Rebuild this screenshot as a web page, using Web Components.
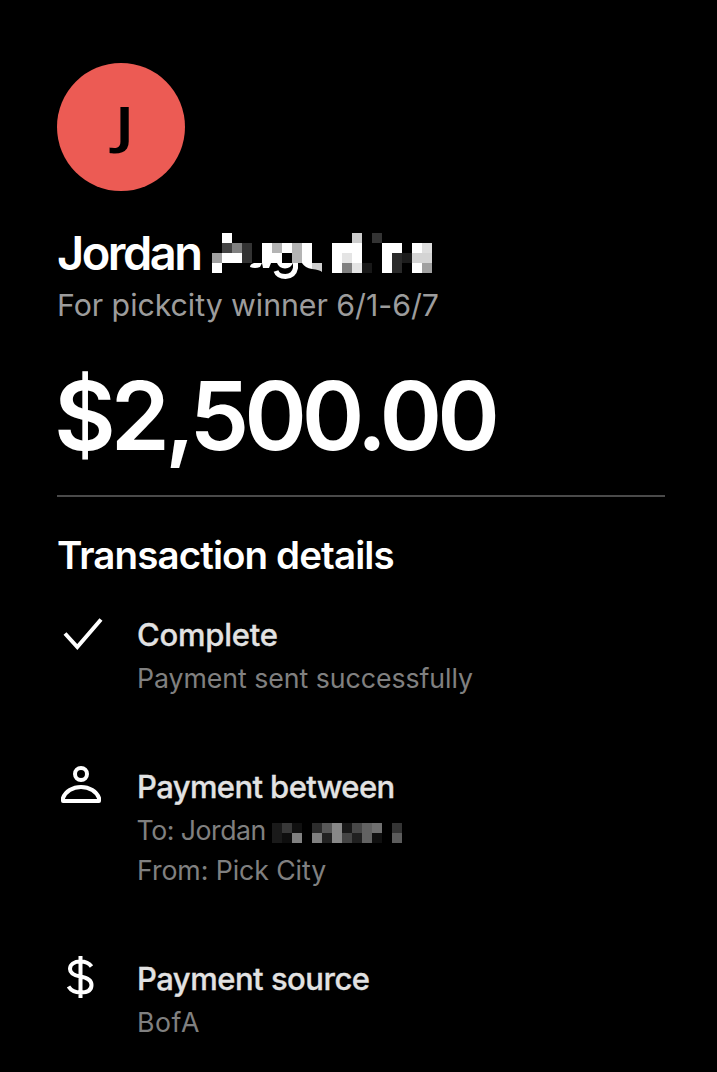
<!DOCTYPE html>
<html lang="en">
<head>
<meta charset="utf-8">
<title>Payment receipt</title>
<style>
html,body{margin:0;background:#000;color:#fff;font-family:Inter,"Liberation Sans",sans-serif}
body{min-height:1072px;overflow:hidden}
</style>
</head>
<body>
<payment-receipt></payment-receipt>
<script>
const define = (name, html) => customElements.define(name, class extends HTMLElement {
  connectedCallback() {
    if (this.shadowRoot) return;
    const t = document.createElement('template');
    t.innerHTML = html;
    this.attachShadow({ mode: 'open' }).append(t.content.cloneNode(true));
  }
});

/* Mosaic that hides private text: "column,row,grey" for each cell of 10px.
   With the residue attribute it also draws the strokes left below the mosaic. */
customElements.define('redaction-mosaic', class extends HTMLElement {
  connectedCallback() {
    if (this.shadowRoot) return;
    const cells = this.getAttribute('cells').trim().split(/\s+/).map(c => {
      const [x, y, g] = c.split(',');
      return `<rect x="${x * 10}" y="${y * 10}" width="10" height="10" fill="#${g}${g}${g}"/>`;
    }).join('');
    const w = this.getAttribute('cols') * 10, h = this.getAttribute('rows') * 10;
    const residue = this.hasAttribute('residue') ? `<g shape-rendering="geometricPrecision" fill="#fff">
        <path d="M42 30H50L48 34Q43 36 38 34Q38 31 42 30Z"/>
        <path d="M50 30H59L57 35H51Z"/>
        <path d="M65 30H81Q79 35 73 35.500Q67 35 65 30Z"/>
        <path d="M64 38Q66 43.500 73.500 43.500Q82 43 83.500 35V30" fill="none" stroke="#fff" stroke-width="5"/>
        <path d="M90 30H100V36Q93 35 90 30Z"/>
        <path d="M100 30H110V39Q108 37 100 36Z" fill="#cfcfcf"/>
      </g>` : '';
    this.attachShadow({ mode: 'open' }).innerHTML =
      `<style>:host{display:block;flex:none}svg{display:block;overflow:visible}</style>
       <svg width="${w}" height="${h}" shape-rendering="crispEdges">${cells}${residue}</svg>`;
  }
});

define('user-avatar', `<style>
:host{display:flex;width:128px;height:128px;border-radius:50%;background:#ec5b54;color:#000;align-items:center;justify-content:center}
span{font:600 50px/76px "Noto Sans",sans-serif;padding:0 0 6px 6px;transform:scaleX(1.3)}
</style><span><slot></slot></span>`);

define('receipt-header', `<style>
:host{display:block}
.name{display:flex;margin-top:34px;height:55px;font-weight:600;font-size:47px;line-height:56px;letter-spacing:-2.5px;white-space:nowrap}
.name redaction-mosaic{margin:8px 0 0 11px}
.name span{width:144px}
.note{margin-top:5px;font-size:30.3px;line-height:40px;letter-spacing:-.04px;color:#9c9c9c}
.amount{margin:35px 0 0 -3px;font-weight:600;font-size:95px;line-height:112px;letter-spacing:-5px}
hr{border:0;height:2px;background:#4a4a4a;margin:23px 0 0}
</style>
<user-avatar>J</user-avatar>
<div class="name"><span>Jordan</span><redaction-mosaic residue cols="22" rows="4" cells="
1,0,ff 14,0,cc 16,0,33
1,1,44 2,1,80 3,1,33 5,1,ff 6,1,b4 7,1,ff 8,1,b4 9,1,ff 12,1,ff 13,1,ff 14,1,ff 17,1,ff 18,1,ff 20,1,ff 21,1,de
0,2,a0 1,2,ff 2,2,ff 3,2,33 5,2,ff 6,2,ff 8,2,b4 9,2,ff 12,2,ff 13,2,e4 14,2,ff 17,2,ff 18,2,2a 19,2,1c 20,2,d4 21,2,d4
0,3,ff 12,3,ff 13,3,80 14,3,e4 15,3,18 17,3,ff 18,3,2a 20,3,ff 21,3,a0"></redaction-mosaic></div>
<div class="note">For pickcity winner 6/1-6/7</div>
<div class="amount">$2,500.00</div>
<hr>`);

define('detail-row', `<style>
:host{display:grid;grid-template-columns:48px 1fr;column-gap:32px;white-space:nowrap}
.title{font-weight:500;-webkit-text-stroke:.3px currentColor;font-size:31px;line-height:40px;color:#e2e2e2;letter-spacing:var(--title-track,0)}
.sub{margin-top:3px;font-size:26.7px;line-height:40px;color:#808080}
::slotted(svg){display:block}
</style>
<slot name="icon"></slot>
<div><div class="title"><slot name="title"></slot></div><div class="sub"><slot></slot></div></div>`);

define('payment-receipt', `<style>
:host{display:block;padding:63px 52px 0 57px}
h2{margin:34px 0 36px;font-weight:600;font-size:38.5px;line-height:48px;letter-spacing:-.9px}
.rows{display:flex;flex-direction:column;gap:69px}
.line{display:flex;height:40px}
.line redaction-mosaic{margin:13px 0 0 0}
.line span{width:135px;margin-left:-.5px;margin-right:.5px}
svg{overflow:visible}
</style>
<receipt-header></receipt-header>
<h2>Transaction details</h2>
<div class="rows">
<detail-row style="--title-track:-.25px">
  <svg slot="icon" width="48" height="40" fill="none" stroke="#fff" stroke-width="4"><path d="M8 18.500 20.300 32 44 4.500"/></svg>
  <span slot="title">Complete</span><div style="letter-spacing:-.04px">Payment sent successfully</div>
</detail-row>
<detail-row style="--title-track:-.6px">
  <svg slot="icon" width="48" height="40" fill="none" stroke="#fff" stroke-width="4"><circle cx="24" cy="7" r="6"/><path d="M6 34V31C8.500 24.500 15.500 20 24 20S39.500 24.500 42 31V34Z" stroke-linejoin="round"/></svg>
  <span slot="title">Payment between</span><div class="line" style="letter-spacing:-.5px"><span>To: Jordan</span><redaction-mosaic cols="13" rows="2" cells="
0,0,1a 1,0,38 2,0,10 4,0,2c 5,0,58 6,0,88 7,0,18 8,0,48 9,0,62 10,0,70 12,0,34
0,1,1a 1,1,0e 2,1,80 4,1,80 5,1,22 6,1,88 7,1,44 8,1,20 9,1,62 10,1,10 12,1,5c"></redaction-mosaic></div><div style="letter-spacing:-.08px">From: Pick City</div>
</detail-row>
<detail-row style="--title-track:-.5px">
  <svg slot="icon" width="48" height="40" fill="none" stroke="#fff" stroke-width="4"><path d="M24-3V39M35 7.500C32.500 4 29 2.500 24 2.500 17.500 2.500 13.500 5.500 13.500 10 13.500 15 18 16.500 24 17.500S35 20.500 35 26 30.500 33.500 24 33.500C18.500 33.500 14.500 31.500 12 27.500" transform="translate(-.5 0)"/></svg>
  <span slot="title">Payment source</span><div style="letter-spacing:.5px">BofA</div>
</detail-row>
</div>`);
</script>
</body>
</html>
